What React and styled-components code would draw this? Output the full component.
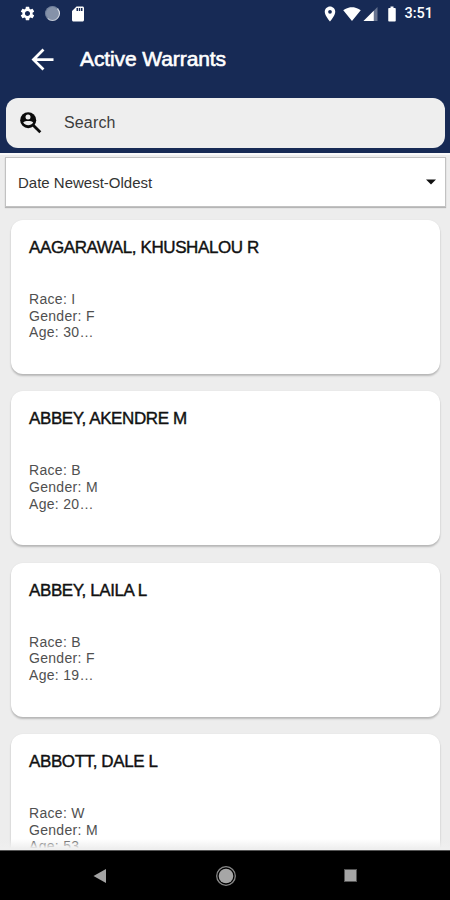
import styled, { createGlobalStyle } from "styled-components";
import { MdSettings, MdSdCard, MdLocationOn, MdSignalWifi4Bar, MdBatteryFull, MdArrowBack } from "react-icons/md"

const warrants = [
    { name: "AAGARAWAL, KHUSHALOU R", race: "I", gender: "F", age: "30…" },
    { name: "ABBEY, AKENDRE M", race: "B", gender: "M", age: "20…" },
    { name: "ABBEY, LAILA L", race: "B", gender: "F", age: "19…" },
    { name: "ABBOTT, DALE L", race: "W", gender: "M", age: "53…" },
]

const StatusBar = () => (
    <Status>
        <StatusLeft>
            <MdSettings size={17} />
            <Spinner />
            <MdSdCard size={18} />
        </StatusLeft>
        <StatusRight>
            <MdLocationOn size={18} />
            <Wifi><MdSignalWifi4Bar size={18} /></Wifi>
            <svg width="15" height="14" viewBox="0 0 15 15">
                <path d="M0 15L15 0V15Z" fill="#fff" fillOpacity="0.35" />
                <path d="M0 15L11 4V15Z" fill="#fff" />
            </svg>
            <Battery><MdBatteryFull size={18} /></Battery>
            <Clock>3:51</Clock>
        </StatusRight>
    </Status>
)

const PersonSearchIcon = () => (
    <svg width="22" height="22" viewBox="0 0 22 22">
        <path d="M13 13L20.3 20.3" stroke="#0c0c0c" strokeWidth="2.8" />
        <circle cx="8.2" cy="8.2" r="8" fill="#0c0c0c" />
        <circle cx="8" cy="5.1" r="2.5" fill="#eee" />
        <path d="M3.2 10.6C4.2 9.2 6.2 8.9 8.2 8.9s4 .3 5 1.7C12 12.4 10.200 13.200 8.200 13.200S4.400 12.400 3.200 10.600Z" fill="#eee" />
    </svg>
)

const App = () => {
    return (
        <>
            <GlobalStyle />
            <Screen>
                <Header>
                    <StatusBar />
                    <Toolbar>
                        <MdArrowBack size={33} />
                        <Title>Active Warrants</Title>
                    </Toolbar>
                    <SearchBox>
                        <PersonSearchIcon />
                        <span>Search</span>
                    </SearchBox>
                </Header>
                <Content>
                    <SortSelect>
                        <span>Date Newest-Oldest</span>
                        <svg width="10" height="6" viewBox="0 0 10 6">
                            <path d="M0 0.5H10L5 5.5Z" fill="#111" />
                        </svg>
                    </SortSelect>
                    <List>
                        {warrants.map((w) => (
                            <Card key={w.name}>
                                <Name>{w.name}</Name>
                                <Details>
                                    <div>Race: {w.race}</div>
                                    <div>Gender: {w.gender}</div>
                                    <div>Age: {w.age}</div>
                                </Details>
                            </Card>
                        ))}
                    </List>
                    <Fade />
                </Content>
                <NavBar>
                    <svg width="14" height="16" viewBox="0 0 14 16">
                        <path d="M0.5 8L13 1V15Z" fill="#a3a3a3" />
                    </svg>
                    <svg width="22" height="22" viewBox="0 0 22 22">
                        <circle cx="11" cy="11" r="9.3" fill="none" stroke="#888" strokeWidth="1.3" />
                        <circle cx="11" cy="11" r="7.3" fill="#a6a6a6" />
                    </svg>
                    <RecentsButton />
                </NavBar>
            </Screen>
        </>
    )
}

export default App;

const GlobalStyle = createGlobalStyle`
    * {
        box-sizing: border-box;
    }

    body {
        margin: 0;
        font-family: "Liberation Sans", Arial, sans-serif;
    }

    svg {
        display: block;
        flex-shrink: 0;
    }
`

const Screen = styled.div`
    display: flex;
    flex-direction: column;
    width: 450px;
    height: 900px;
    overflow: hidden;
    background: #ededed;
`

const Header = styled.header`
    flex: none;
    height: 155px;
    color: #fff;
    background: #172a55;
    border-bottom: 2px solid #fafafa;
`

const Status = styled.div`
    display: flex;
    justify-content: space-between;
    height: 27px;
    padding: 0 17px 0 19px;
`

const StatusLeft = styled.div`
    display: flex;
    align-items: center;
    gap: 9px;
`

const StatusRight = styled.div`
    display: flex;
    align-items: center;
`

const Spinner = styled.div`
    width: 15px;
    height: 15px;
    border-radius: 50%;
    background: #8592a9;
    border: 1px solid #71809c;
    border-right-color: #e4e8ee;
    border-bottom-color: #c4cbd6;
`

const Wifi = styled.div`
    margin: 0 2px 0 4px;
`

const Battery = styled.div`
    margin: 0 3px 0 5px;
`

const Clock = styled.span`
    font-family: Roboto, sans-serif;
    font-size: 14.5px;
    font-weight: 500;
`

const Toolbar = styled.div`
    display: flex;
    align-items: center;
    height: 64px;
    padding-left: 26px;
`

const Title = styled.h1`
    margin: 0 0 0 21px;
    font-size: 21px;
    font-weight: 400;
    letter-spacing: -0.1px;
    -webkit-text-stroke: 0.6px #fff;
`

const SearchBox = styled.div`
    display: flex;
    align-items: center;
    height: 50px;
    margin: 7px 5px 0 6px;
    padding-left: 14px;
    border-radius: 12px;
    background: #eee;
    color: #3c3c3c;
    font-size: 16px;
    letter-spacing: 0.15px;

    span {
        margin-left: 22px;
    }
`

const Content = styled.main`
    position: relative;
    flex: 1;
    min-height: 0;
    overflow: hidden;
    padding-top: 2px;
`

const SortSelect = styled.div`
    display: flex;
    align-items: center;
    justify-content: space-between;
    height: 50px;
    margin: 0 4px 0 5px;
    padding: 0 9px 0 12px;
    background: #fff;
    border: 1px solid #c2c2c2;
    box-shadow: 0 1px 1px #b5b5b5;
    color: #333;
    font-size: 15px;
`

const List = styled.div`
    display: flex;
    flex-direction: column;
    gap: 17.3px;
    padding: 13px 10px 0 11px;
`

const Card = styled.article`
    flex: none;
    height: 154px;
    padding: 18px;
    border-radius: 12px;
    background: #fff;
    box-shadow: 0 2px 2px rgba(0, 0, 0, 0.22), 0 0 2px rgba(0, 0, 0, 0.06);
`

const Name = styled.h2`
    margin: 0;
    color: #111;
    font-size: 17px;
    font-weight: 400;
    line-height: 20px;
    letter-spacing: -0.4px;
    -webkit-text-stroke: 0.4px #111;
`

const Details = styled.div`
    margin-top: 33px;
    color: #505050;
    font-size: 14px;
    line-height: 16.7px;
    letter-spacing: 0.3px;
`

/* softens the list where it runs under the navigation bar */
const Fade = styled.div`
    position: absolute;
    left: 0;
    right: 0;
    bottom: 0;
    height: 11px;
    background: linear-gradient(rgba(245, 245, 245, 0), #efefef 85%);
`

const NavBar = styled.nav`
    flex: none;
    display: flex;
    align-items: center;
    justify-content: space-between;
    height: 50px;
    padding: 0 93px 0 93px;
    background: #000;
    border-top: 1px solid #555;
`

const RecentsButton = styled.div`
    width: 13px;
    height: 13px;
    background: #a6a6a6;
    outline: 1px solid #555;
    outline-offset: -1px;
`
